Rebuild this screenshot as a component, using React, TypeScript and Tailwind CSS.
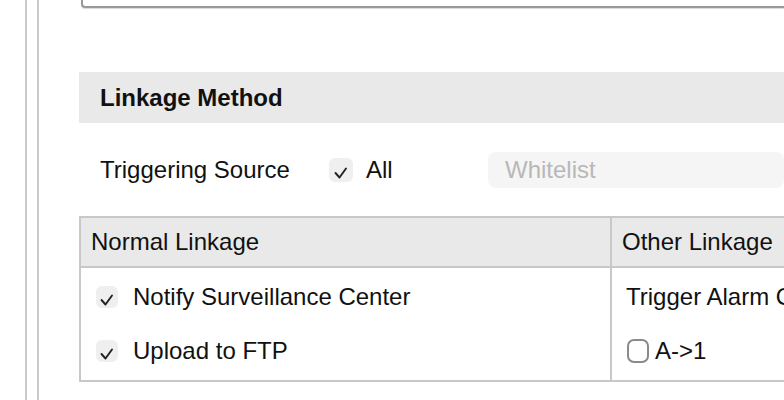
import React from 'react';

function CheckedBox({ size = 22 }: { size?: number }) {
  return (
    <span
      className="flex items-center justify-center rounded-[6px] bg-[#efefef] shrink-0"
      style={{ width: size, height: size }}
    >
      <svg width="16" height="16" viewBox="0 0 16 16" className="mt-[5px]">
        <polyline points="2.5,8 6.5,12.5 13,3.5" fill="none" stroke="#222" strokeWidth="1.9" strokeLinecap="round" strokeLinejoin="round" />
      </svg>
    </span>
  );
}

export default function App() {
  return (
    <div className="w-[784px] h-[400px] overflow-hidden bg-white text-[#111] font-['Liberation_Sans',Arial,sans-serif]">
      <div className="pl-[25px] h-full">
        <div className="border-l-2 border-[#cacaca] pl-[10px] h-full">
          <div className="border-l-2 border-[#cacaca] pl-[40px] h-full">
            {/* bottom of the panel above */}
            <div className="ml-[2px] h-[8px] border-l-2 border-b-2 border-[#9a9a9a] rounded-bl-[4px] shadow-[0_1px_1px_rgba(0,0,0,0.15)]" />

            <div className="mt-[64px] h-[51px] bg-[#e9e9e9] flex items-center pl-[21px]">
              <span className="text-[24px] font-bold">Linkage Method</span>
            </div>

            <div className="mt-[29px] h-[36px] flex items-center pl-[21px] text-[24px]">
              <span className="w-[229px]">Triggering Source</span>
              <CheckedBox size={24} />
              <span className="ml-[13px] w-[122px]">All</span>
              <div className="flex-1 h-[36px] rounded-[8px] bg-[#f5f5f5] flex items-center pl-[17px] text-[#b8b8b8] text-[24px]">
                Whitelist
              </div>
            </div>

            <div className="mt-[28px] w-[900px] border-2 border-[#c8c8c8] text-[24px]">
              <div className="flex bg-[#e9e9e9] border-b-2 border-[#c8c8c8] h-[50px]">
                <div className="w-[531px] border-r-2 border-[#c8c8c8] flex items-center pl-[10px]">Normal Linkage</div>
                <div className="flex-1 flex items-center pl-[10px]">Other Linkage</div>
              </div>
              <div className="flex h-[112px]">
                <div className="w-[531px] border-r-2 border-[#c8c8c8] flex flex-col pl-[15px] pt-[18px] gap-[32px]">
                  <div className="flex items-center h-[22px] gap-[15px]">
                    <CheckedBox />
                    <span>Notify Surveillance Center</span>
                  </div>
                  <div className="flex items-center h-[22px] gap-[15px]">
                    <CheckedBox />
                    <span>Upload to FTP</span>
                  </div>
                </div>
                <div className="flex-1 flex flex-col pl-[14px] pt-[18px] gap-[32px]">
                  <div className="flex items-center h-[22px] whitespace-nowrap">Trigger Alarm Output</div>
                  <div className="flex items-center h-[22px] gap-[6px] pl-[1px]">
                    <span className="w-[22px] h-[24px] rounded-[7px] border-2 border-[#8a8a8a]" />
                    <span>A-&gt;1</span>
                  </div>
                </div>
              </div>
            </div>
          </div>
        </div>
      </div>
    </div>
  );
}
